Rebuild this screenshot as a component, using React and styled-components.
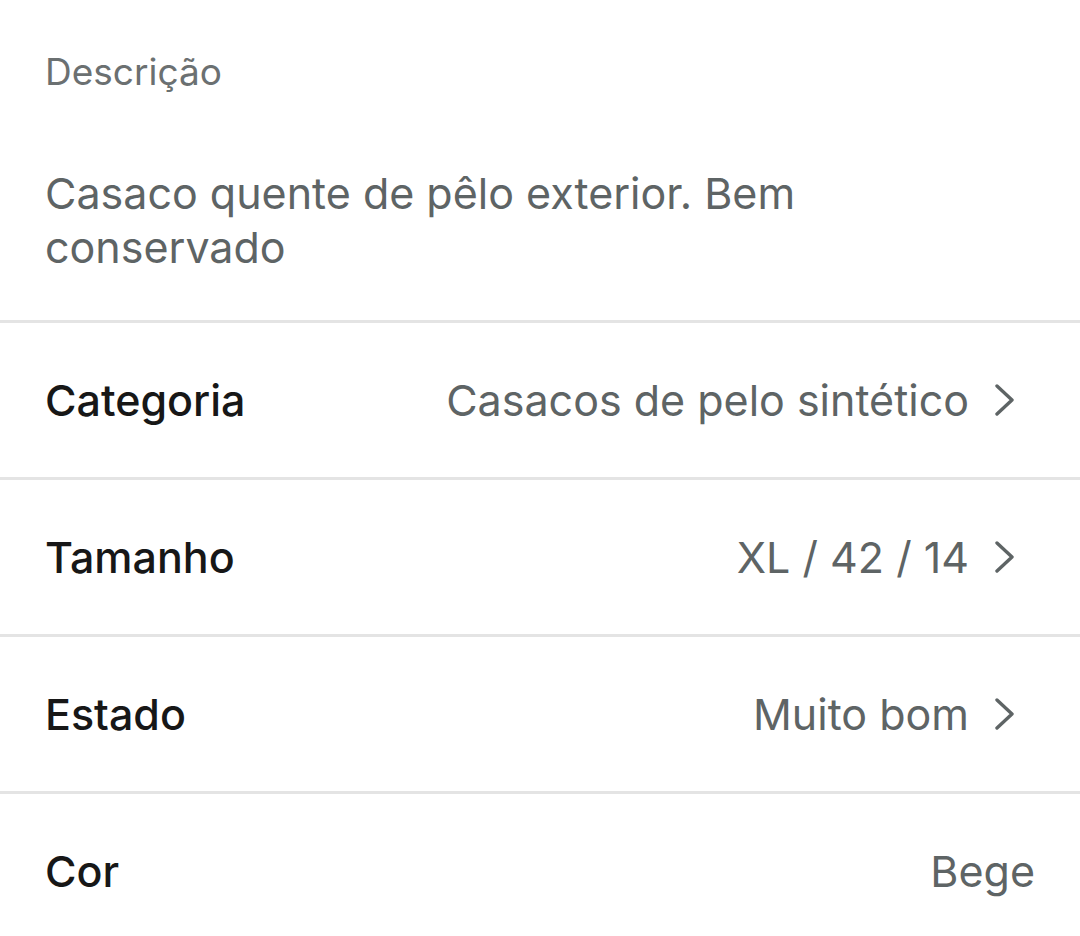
import React from 'react';
import styled, { createGlobalStyle } from 'styled-components';

const GlobalStyle = createGlobalStyle`
    body {
        margin: 0;
        background: #ffffff;
        font-family: Inter, "Noto Sans", sans-serif;
        -webkit-font-smoothing: antialiased;
    }
`;

const Page = styled.div`
    width: 1080px;
    height: 936px;
    overflow: hidden;
    background: #ffffff;
`;

const DescriptionBlock = styled.section`
    padding: 44px 45px 46px;
`;

const DescriptionLabel = styled.div`
    font-size: 37px;
    line-height: 56px;
    color: #6b7071;
`;

const DescriptionText = styled.p`
    margin: 66px 0 0 0;
    font-size: 43px;
    line-height: 54px;
    color: #5e6465;
`;

const Row = styled.div`
    display: flex;
    align-items: center;
    justify-content: space-between;
    height: 154px;
    padding: 0 45px;
    border-top: 3px solid #e4e4e4;
`;

const RowLabel = styled.div`
    font-size: 43px;
    font-weight: 500;
    color: #171717;
`;

const RowValue = styled.div`
    display: flex;
    align-items: center;
    font-size: 43px;
    color: #5e6465;
    margin-right: ${props => props.withChevron ? '20px' : '0'};
`;

const Chevron = styled.svg`
    width: 20px;
    height: 32px;
    margin-left: 26px;
    flex-shrink: 0;
`;

const details = [
    { label: 'Categoria', value: 'Casacos de pelo sintético', link: true },
    { label: 'Tamanho', value: 'XL / 42 / 14', link: true },
    { label: 'Estado', value: 'Muito bom', link: true },
    { label: 'Cor', value: 'Bege', link: false },
];

const ChevronIcon = () => (
    <Chevron viewBox="0 0 20 32">
        <path d="M2 2 L17 16 L2 30" fill="none" stroke="#5e6465" strokeWidth="3.4" strokeLinecap="round" strokeLinejoin="round" />
    </Chevron>
);

export default function App() {
    return (
        <Page>
            <GlobalStyle />
            <DescriptionBlock>
                <DescriptionLabel>Descrição</DescriptionLabel>
                <DescriptionText>Casaco quente de pêlo exterior. Bem conservado</DescriptionText>
            </DescriptionBlock>
            {details.map((item) => (
                <Row key={item.label}>
                    <RowLabel>{item.label}</RowLabel>
                    <RowValue withChevron={item.link}>
                        {item.value}
                        {item.link && <ChevronIcon />}
                    </RowValue>
                </Row>
            ))}
        </Page>
    );
}
